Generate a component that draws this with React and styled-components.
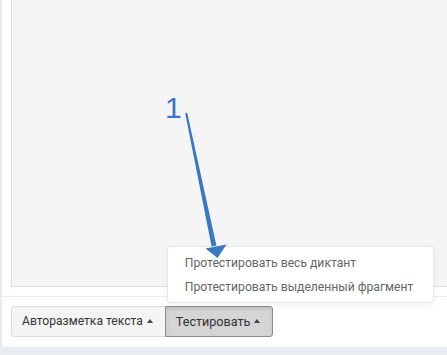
import React from "react";
import styled, { createGlobalStyle } from "styled-components";

const GlobalStyle = createGlobalStyle`
  html, body {
    margin: 0;
    padding: 0;
    background: #e9edf2;
    overflow: hidden;
  }
  body {
    font-family: Roboto, "Liberation Sans", sans-serif;
  }
`;

const Page = styled.div`
  position: relative;
  width: 447px;
  height: 355px;
  padding: 0 0 8px 2px;
  box-sizing: border-box;
`;

const Panel = styled.div`
  background: #ffffff;
  margin-right: -20px;
  border-bottom-left-radius: 4px;
  display: flex;
  flex-direction: column;
`;

const Editor = styled.div`
  margin-left: 9px;
  height: 287px;
  box-sizing: border-box;
  background: #f5f5f5;
  border-left: 1px solid #dddddd;
  border-bottom: 1px solid #dddddd;
`;

const Footer = styled.div`
  margin-top: 9px;
  border-top: 1px solid #ececec;
  padding: 9px 9px 10px;
  display: flex;
`;

const BtnGroup = styled.div`
  display: inline-flex;
`;

const BtnWrap = styled.div`
  position: relative;
  display: flex;
`;

const Button = styled.button`
  font-family: Roboto, "Liberation Sans", sans-serif;
  font-size: ${(p) => (p.$first ? "12.1px" : "12.6px")};
  line-height: 19px;
  color: #333333;
  padding: 5px 12px 5px 10px;
  margin: 0;
  display: inline-flex;
  align-items: center;
  gap: 4px;
  cursor: pointer;
  background: ${(p) => (p.$active ? "#d5d5d5" : "#f4f4f4")};
  border: 1px solid ${(p) => (p.$active ? "#8e8e8e" : "#dcdcdc")};
  box-shadow: ${(p) => (p.$active ? "inset 0 2px 4px rgba(0,0,0,0.1)" : "none")};
  border-radius: ${(p) => (p.$first ? "3px 0 0 3px" : "0 3px 3px 0")};
  margin-left: ${(p) => (p.$first ? "0" : "-1px")};
`;

const Caret = styled.span`
  display: inline-block;
  width: 0;
  height: 0;
  border-left: 3.5px solid transparent;
  border-right: 3.5px solid transparent;
  border-bottom: 4px solid #444444;
  margin-top: -1px;
`;

const Menu = styled.ul`
  position: absolute;
  left: 1px;
  bottom: calc(100% + 3px);
  margin: 0;
  padding: 4px 0 3px;
  list-style: none;
  background: #ffffff;
  border: 1px solid rgba(0, 0, 0, 0.09);
  border-radius: 4px;
  box-shadow: 0 2px 6px rgba(0, 0, 0, 0.06);
  white-space: nowrap;
  z-index: 2;
`;

const MenuItem = styled.li`
  font-size: 12.15px;
  line-height: 24px;
  color: #666666;
  padding: 0 20px 0 17px;
`;

const Label = styled.div`
  position: absolute;
  left: 165px;
  top: 90px;
  font-family: "Liberation Sans", Arial, sans-serif;
  font-size: 30px;
  line-height: 36px;
  color: #3878c4;
  z-index: 3;
`;

const ArrowSvg = styled.svg`
  position: absolute;
  left: 0;
  top: 0;
  z-index: 3;
  pointer-events: none;
`;

export default function App() {
  return (
    <>
      <GlobalStyle />
      <Page>
        <Panel>
          <Editor />
          <Footer>
            <BtnGroup>
              <Button $first>
                Авторазметка текста <Caret />
              </Button>
              <BtnWrap>
                <Button $active>
                  Тестировать <Caret />
                </Button>
                <Menu>
                  <MenuItem>Протестировать весь диктант</MenuItem>
                  <MenuItem>Протестировать выделенный фрагмент</MenuItem>
                </Menu>
              </BtnWrap>
            </BtnGroup>
          </Footer>
        </Panel>
        <Label>1</Label>
        <ArrowSvg width="447" height="355" viewBox="0 0 447 355">
          <polygon
            points="185.2,113.2 187.2,112.8 216.4,245.5 211.6,246.5"
            fill="#3878c4"
          />
          <polygon points="205.5,248.5 226.5,244.5 217.5,258" fill="#3878c4" />
        </ArrowSvg>
      </Page>
    </>
  );
}
